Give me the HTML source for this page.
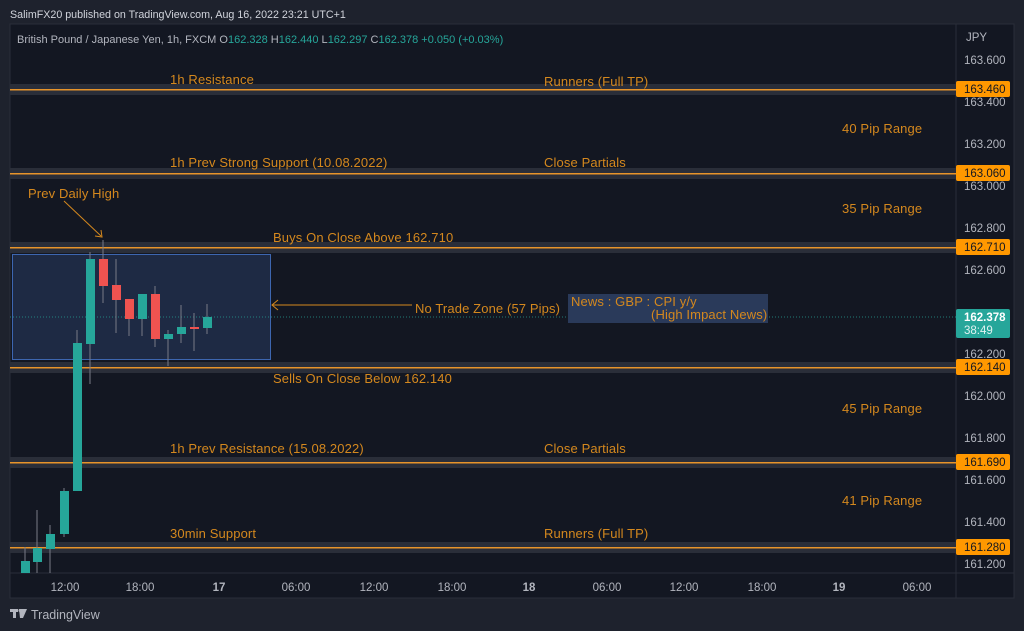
<!DOCTYPE html>
<html><head><meta charset="utf-8"><style>
html,body{margin:0;padding:0;background:#1e222d;width:1024px;height:631px;overflow:hidden}
svg{display:block;font-family:"Liberation Sans",sans-serif}
</style></head><body>
<svg width="1024" height="631" viewBox="0 0 1024 631" xmlns="http://www.w3.org/2000/svg">
<rect width="1024" height="631" fill="#1e222d"/>
<text x="10" y="18" fill="#d1d4dc" font-size="10.7">SalimFX20 published on TradingView.com, Aug 16, 2022 23:21 UTC+1</text>
<rect x="10" y="24" width="1004" height="574" fill="#131722" stroke="#2a2e39"/>
<line x1="956" y1="24" x2="956" y2="598" stroke="#2a2e39"/>
<line x1="10" y1="573" x2="1014" y2="573" stroke="#2a2e39"/>
<text x="17" y="43" font-size="11" fill="#b2b5be">British Pound / Japanese Yen, 1h, FXCM  O<tspan fill="#26a69a">162.328</tspan>  H<tspan fill="#26a69a">162.440</tspan>  L<tspan fill="#26a69a">162.297</tspan>  C<tspan fill="#26a69a">162.378</tspan>  <tspan fill="#26a69a">+0.050 (+0.03%)</tspan></text>
<g>
<rect x="10" y="84" width="946" height="11" fill="#2a2e39"/><rect x="10" y="89" width="946" height="1.5" fill="#e8942a"/>
<rect x="10" y="168" width="946" height="11" fill="#2a2e39"/><rect x="10" y="173" width="946" height="1.5" fill="#e8942a"/>
<rect x="10" y="242" width="946" height="11" fill="#2a2e39"/><rect x="10" y="247" width="946" height="1.5" fill="#e8942a"/>
<rect x="10" y="362" width="946" height="11" fill="#2a2e39"/><rect x="10" y="367" width="946" height="1.5" fill="#e8942a"/>
<rect x="10" y="457" width="946" height="11" fill="#2a2e39"/><rect x="10" y="462" width="946" height="1.5" fill="#e8942a"/>
<rect x="10" y="542" width="946" height="11" fill="#2a2e39"/><rect x="10" y="547" width="946" height="1.5" fill="#e8942a"/>
</g>
<rect x="12.5" y="254.5" width="258" height="105" fill="#1e2a44" stroke="#3d66b0"/>
<line x1="10" y1="317" x2="956" y2="317" stroke="#26a69a" stroke-dasharray="1 2" opacity="0.7"/>
<rect x="568" y="294" width="200" height="29" fill="#2a3a5a"/>
<g font-size="13" fill="#d4881e" letter-spacing="0.12">
<text x="170" y="84">1h Resistance</text>
<text x="544" y="86">Runners (Full TP)</text>
<text x="842" y="133">40 Pip Range</text>
<text x="170" y="167">1h Prev Strong Support (10.08.2022)</text>
<text x="544" y="167">Close Partials</text>
<text x="28" y="198">Prev Daily High</text>
<text x="842" y="213">35 Pip Range</text>
<text x="273" y="242">Buys On Close Above 162.710</text>
<text x="415" y="313">No Trade Zone (57 Pips)</text>
<text x="571" y="306">News : GBP : CPI y/y</text>
<text x="651" y="319">(High Impact News)</text>
<text x="273" y="383">Sells On Close Below 162.140</text>
<text x="842" y="413">45 Pip Range</text>
<text x="170" y="453">1h Prev Resistance (15.08.2022)</text>
<text x="544" y="453">Close Partials</text>
<text x="842" y="505">41 Pip Range</text>
<text x="170" y="538">30min Support</text>
<text x="544" y="538">Runners (Full TP)</text>
</g>
<line x1="64" y1="201" x2="101" y2="236" stroke="#d4881e"/><path d="M95 236 L102 237 L101 230" stroke="#d4881e" fill="none"/>
<line x1="272" y1="305" x2="412" y2="305" stroke="#d4881e"/><path d="M278 300 L272 305 L278 310" stroke="#d4881e" fill="none"/>
<g stroke="#787b86" stroke-width="1">
<line x1="25" y1="547" x2="25" y2="573"/><line x1="37" y1="510" x2="37" y2="573"/><line x1="50" y1="525" x2="50" y2="573"/>
<line x1="64" y1="488" x2="64" y2="537"/><line x1="77" y1="330" x2="77" y2="491"/><line x1="90" y1="252" x2="90" y2="384"/>
<line x1="103" y1="240" x2="103" y2="303"/><line x1="116" y1="259" x2="116" y2="333"/><line x1="129" y1="299" x2="129" y2="336"/>
<line x1="142" y1="294" x2="142" y2="336"/><line x1="155" y1="286" x2="155" y2="347"/><line x1="168" y1="330" x2="168" y2="366"/>
<line x1="181" y1="305" x2="181" y2="343"/><line x1="194" y1="313" x2="194" y2="351"/><line x1="207" y1="304" x2="207" y2="334"/>
</g>
<g fill="#26a69a">
<rect x="21" y="561" width="9" height="12"/><rect x="33" y="548" width="9" height="14"/><rect x="46" y="534" width="9" height="15"/>
<rect x="60" y="491" width="9" height="43"/><rect x="73" y="343" width="9" height="148"/><rect x="86" y="259" width="9" height="85"/>
<rect x="138" y="294" width="9" height="25"/><rect x="164" y="334" width="9" height="5"/><rect x="177" y="327" width="9" height="7"/>
<rect x="203" y="317" width="9" height="11"/>
</g>
<g fill="#ef5350">
<rect x="99" y="259" width="9" height="27"/><rect x="112" y="285" width="9" height="15"/><rect x="125" y="299" width="9" height="20"/>
<rect x="151" y="294" width="9" height="45"/><rect x="190" y="327" width="9" height="2"/>
</g>
<g font-size="11.5" fill="#b2b5be">
<text x="966" y="41">JPY</text>
<text x="964" y="64">163.600</text><text x="964" y="106">163.400</text><text x="964" y="148">163.200</text>
<text x="964" y="190">163.000</text><text x="964" y="232">162.800</text><text x="964" y="274">162.600</text>
<text x="964" y="358">162.200</text><text x="964" y="400">162.000</text><text x="964" y="442">161.800</text>
<text x="964" y="484">161.600</text><text x="964" y="526">161.400</text><text x="964" y="568">161.200</text>
</g>
<g font-size="11.5" fill="#131722">
<rect x="956" y="81" width="54" height="16" rx="2" fill="#ff9800"/><text x="964" y="93">163.460</text>
<rect x="956" y="165" width="54" height="16" rx="2" fill="#ff9800"/><text x="964" y="177">163.060</text>
<rect x="956" y="239" width="54" height="16" rx="2" fill="#ff9800"/><text x="964" y="251">162.710</text>
<rect x="956" y="359" width="54" height="16" rx="2" fill="#ff9800"/><text x="964" y="371">162.140</text>
<rect x="956" y="454" width="54" height="16" rx="2" fill="#ff9800"/><text x="964" y="466">161.690</text>
<rect x="956" y="539" width="54" height="16" rx="2" fill="#ff9800"/><text x="964" y="551">161.280</text>
</g>
<rect x="956" y="309" width="54" height="29" rx="2" fill="#26a69a"/>
<text x="964" y="321" font-size="11.5" font-weight="bold" fill="#fff">162.378</text>
<text x="964" y="334" font-size="11.5" fill="#e0f2f1">38:49</text>
<g font-size="11.5" fill="#b2b5be" text-anchor="middle">
<text x="65" y="591">12:00</text><text x="140" y="591">18:00</text><text x="219" y="591" font-weight="bold">17</text>
<text x="296" y="591">06:00</text><text x="374" y="591">12:00</text><text x="452" y="591">18:00</text>
<text x="529" y="591" font-weight="bold">18</text><text x="607" y="591">06:00</text><text x="684" y="591">12:00</text>
<text x="762" y="591">18:00</text><text x="839" y="591" font-weight="bold">19</text><text x="917" y="591">06:00</text>
</g>
<g fill="#b2b5be">
<rect x="10" y="609" width="8" height="3"/><rect x="13" y="609" width="3" height="9"/>
<path d="M19 609 H27 L23 618 H20 Z"/><circle cx="20" cy="610.5" r="1.5"/>
</g>
<text x="31" y="619" font-size="12.5" fill="#b2b5be">TradingView</text>
</svg>
</body></html>
